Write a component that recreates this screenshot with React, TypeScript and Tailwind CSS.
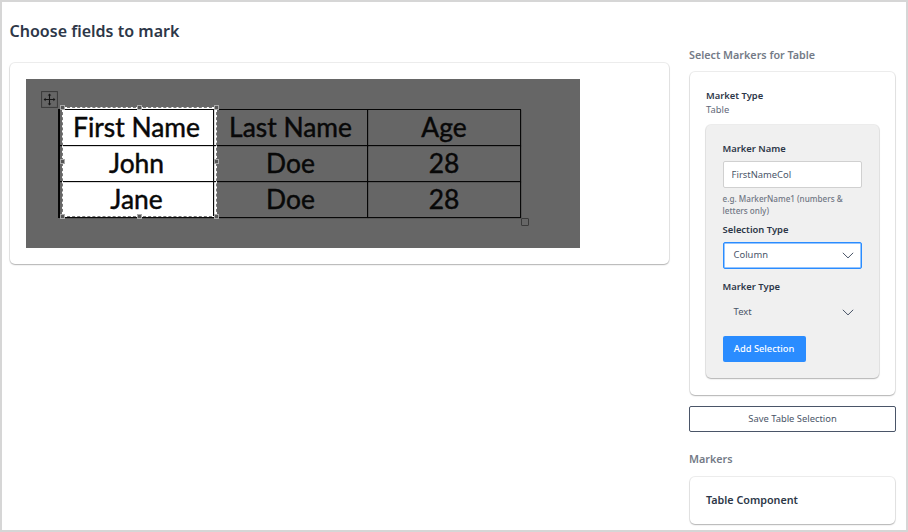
import type { ReactNode } from "react";

const rows = [
  ["First Name", "Last Name", "Age"],
  ["John", "Doe", "28"],
  ["Jane", "Doe", "28"],
];

const handles = [
  "left-[-2px] top-[-2px]",
  "left-[75px] top-[-2px]",
  "left-[152px] top-[-2px]",
  "left-[-2px] top-[52px]",
  "left-[152px] top-[52px]",
  "left-[-2px] top-[107px]",
  "left-[75px] top-[107px]",
  "left-[152px] top-[107px]",
];

const cardShadow =
  "shadow-[0_0_0_1px_rgba(0,0,0,0.07),0_1px_1.5px_rgba(0,0,0,0.25)]";

function Label({ children }: { children: ReactNode }) {
  return (
    <div className="h-[14px] text-[9.4px] leading-[14px] font-semibold text-[#2d3748]">
      {children}
    </div>
  );
}

function Chevron() {
  return (
    <svg width="12" height="7" viewBox="0 0 12 7" fill="none" stroke="#4a5568" strokeWidth="1">
      <path d="M0.8 0.8 6 5.9 11.2 0.8" />
    </svg>
  );
}

function Document() {
  return (
    <div className="relative h-[169px] w-[554px] bg-[#666]">
      <div className="absolute left-[36px] top-[28px] h-[110px] w-[154px] bg-white" />
      <svg className="absolute left-[15px] top-[12px]" width="17" height="17" viewBox="0 0 17 17" fill="none">
        <rect x="0.6" y="0.6" width="15.8" height="15.8" stroke="#3a3a3a" />
        <path d="M8.5 3.5v10M3.5 8.5h10" stroke="#151515" strokeWidth="1.1" />
        <path d="m8.5 2.6 1.8 2H6.7zM8.5 14.4l1.8-2H6.7zM2.6 8.5l2-1.8v3.6zM14.4 8.5l-2-1.8v3.6z" fill="#151515" />
      </svg>
      <div className="absolute left-[32px] top-[30px] grid w-[463px] grid-cols-[154px_154px_153px] grid-rows-[36px_36px_36px] border-t border-l-2 border-[#080808]">
        {rows.flat().map((cell, i) => (
          <div
            key={i}
            className="flex items-center justify-center border-r border-b border-[#080808] pb-px font-[Lato,sans-serif] text-[26.4px] leading-none text-[#080808] shadow-[0_0_0_0.3px_rgba(0,0,0,0.5)] [-webkit-text-stroke:0.45px_#080808]"
          >
            {cell}
          </div>
        ))}
      </div>
      <div className="absolute left-[36px] top-[28px] h-[110px] w-[155px]">
        <div className="absolute inset-0 border border-white" />
        <div className="absolute inset-0 border border-dashed border-[#777]" />
        {handles.map((place) => (
          <div key={place} className={`absolute size-[5px] border border-[#aaa] bg-[#555] ${place}`} />
        ))}
      </div>
      <div className="absolute left-[495px] top-[139px] size-[8px] rounded-[1px] border border-[#3a3a3a]" />
    </div>
  );
}

export default function App() {
  return (
    <div className="flex h-[532px] w-[908px] overflow-hidden border-2 border-[#d6d6d6] bg-white font-['Noto_Sans',sans-serif] text-[9.4px] text-[#4a5568]">
      <main className="ml-[8px] w-[659px] pt-[17px]">
        <h1 className="-ml-[0.5px] h-[24px] text-[16.05px] leading-[24px] font-semibold text-[#2d3748]">
          Choose fields to mark
        </h1>
        <section className={`mt-[20px] h-[201px] w-[659px] rounded-[5px] p-[16px] ${cardShadow}`}>
          <Document />
        </section>
      </main>

      <aside className="ml-[21px] w-[205px] pt-[45px]">
        <h2 className="-ml-px h-[16px] text-[10.75px] leading-[16px] font-semibold text-[#747b87]">
          Select Markers for Table
        </h2>
        <section className={`mt-[9px] h-[323px] rounded-[5px] px-[16px] pt-[17px] ${cardShadow}`}>
          <Label>Market Type</Label>
          <div className="h-[14px] leading-[14px] text-[#5f697a]">Table</div>
          <div className={`mt-[8px] h-[253px] w-[173px] rounded-[5px] bg-[#f0f0f0] pr-[17px] pl-[16.6px] pt-[17px] ${cardShadow}`}>
            <Label>Marker Name</Label>
            <input
              className="mt-[5px] block h-[27px] w-[139px] rounded-[2px] border border-[#d0d0d0] bg-white px-[8px] outline-none"
              defaultValue="FirstNameCol"
            />
            <p className="mt-[5px] text-[8.15px] leading-[12px] font-medium text-[#717784]">
              e.g. MarkerName1 (numbers &amp; letters only)
            </p>
            <div className="mt-[6px]">
              <Label>Selection Type</Label>
            </div>
            <div className="mt-[5px] flex h-[27px] w-[139px] items-center justify-between rounded-[2px] border border-[#2a8cff] bg-white pr-[7px] pl-[10px] shadow-[inset_0_0_0_0.5px_#2a8cff]">
              <span>Column</span>
              <Chevron />
            </div>
            <div className="mt-[11px]">
              <Label>Marker Type</Label>
            </div>
            <div className="mt-[5px] flex h-[27px] w-[139px] items-center justify-between pr-[8px] pl-[11px]">
              <span>Text</span>
              <Chevron />
            </div>
            <button className="mt-[10px] block h-[26px] w-[83px] rounded-[2px] bg-[#2a8cff] text-[9.3px] font-medium text-white">
              Add Selection
            </button>
          </div>
        </section>
        <button className="mt-[11px] -ml-px block h-[26px] w-[207px] rounded-[2px] border border-[#4a5568] bg-white">
          Save Table Selection
        </button>
        <h2 className="-ml-px mt-[19px] h-[16px] text-[10.75px] leading-[16px] font-semibold text-[#747b87]">
          Markers
        </h2>
        <section className={`mt-[10px] flex h-[47px] items-center rounded-[5px] px-[16px] pb-px text-[10.75px] font-semibold text-[#2d3748] ${cardShadow}`}>
          Table Component
        </section>
      </aside>
    </div>
  );
}
